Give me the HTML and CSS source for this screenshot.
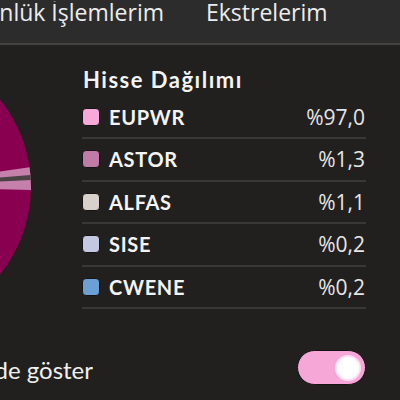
FILE: index.html
```html
<!DOCTYPE html>
<html lang="tr">
<head>
<meta charset="utf-8">
<title>Hisse Dağılımı</title>
<link rel="stylesheet" href="styles.css">
</head>
<body>
<nav class="tabs">
  <div class="tab tab-cut"><span>Günlük İşlemlerim</span></div>
  <div class="tab">Ekstrelerim</div>
</nav>
<main class="content">
  <section class="dist">
    <div class="chart">
      <svg width="82" height="260" viewBox="0 45 82 260" aria-hidden="true">
        <circle cx="-108" cy="187" r="139" fill="#8a0050"/>
        <path d="M-108 187 L29.6 167.2 A139 139 0 0 1 30.97 189.9 Z" fill="#c580ab"/>
        <path d="M-108 187 L30.47 174.9 A139 139 0 0 1 30.82 180 Z" fill="#4a4245"/>
      </svg>
    </div>
    <div class="legend">
      <h2 class="title">Hisse Dağılımı</h2>
      <ul class="rows">
        <li class="row"><span class="swatch sw-eupwr"></span><span class="label">EUPWR</span><span class="value">%97,0</span></li>
        <li class="row"><span class="swatch sw-astor"></span><span class="label">ASTOR</span><span class="value">%1,3</span></li>
        <li class="row"><span class="swatch sw-alfas"></span><span class="label">ALFAS</span><span class="value">%1,1</span></li>
        <li class="row"><span class="swatch sw-sise"></span><span class="label">SISE</span><span class="value">%0,2</span></li>
        <li class="row"><span class="swatch sw-cwene"></span><span class="label">CWENE</span><span class="value">%0,2</span></li>
      </ul>
    </div>
  </section>
  <div class="setting">
    <div class="setting-label"><span>Grafikte yüzde göster</span></div>
    <div class="toggle"><span class="knob"></span></div>
  </div>
</main>
</body>
</html>
```
FILE: styles.css
```css
* { box-sizing: border-box; }
html, body { margin: 0; padding: 0; }
body {
  width: 400px;
  height: 400px;
  overflow: hidden;
  background: #221f1f;
  color: #f2f2f2;
  font-family: "Open Sans", "Noto Sans", sans-serif;
}
.tabs {
  display: flex;
  height: 45px;
  padding-top: 1px;
  background: #2d2c2c;
  border-bottom: 2px solid #444343;
  font-size: 23px;
  line-height: 22px;
  color: #ececec;
  white-space: nowrap;
}
.tab-cut {
  width: 164px;
  overflow: hidden;
  display: flex;
  justify-content: flex-end;
}
.tab + .tab { margin-left: 42px; }
.content {
  padding: 22.6px 34px 0 0;
}
.dist { display: flex; }
.chart { flex: 0 0 82px; margin-top: -22.6px; }
.chart svg { display: block; }
.legend { flex: 1; }
.title {
  margin: 0 0 5px 1px;
  font-family: "Lato", sans-serif;
  font-weight: 700;
  font-size: 22px;
  line-height: 24px;
  letter-spacing: 1.5px;
  color: #f4f4f4;
}
.rows { list-style: none; margin: 0; padding: 0; }
.row {
  display: flex;
  align-items: center;
  height: 42.5px;
  border-bottom: 2px solid #383636;
}
.swatch {
  width: 18px;
  height: 18px;
  border-radius: 4px;
  border: 1px solid #151313;
  margin-right: 9px;
}
.sw-eupwr { background: #f8a9d9; }
.sw-astor { background: #c07ca6; }
.sw-alfas { background: #d8d0cb; }
.sw-sise { background: #c4c8e0; }
.sw-cwene { background: #6c9fd4; }
.label {
  flex: 1;
  font-family: "Lato", sans-serif;
  font-weight: 700;
  font-size: 20px;
  letter-spacing: 0.7px;
  color: #f4f4f4;
}
.value {
  font-size: 21px;
  color: #e6e6e6;
  padding-right: 1px;
}
.setting {
  display: flex;
  justify-content: space-between;
  align-items: flex-start;
  margin-top: 42px;
}
.setting-label {
  width: 93px;
  overflow: hidden;
  display: flex;
  justify-content: flex-end;
  white-space: nowrap;
  margin-top: 6px;
  font-family: "Lato", sans-serif;
  font-size: 24px;
  line-height: 26px;
  color: #f0f0f0;
}
.toggle {
  width: 69px;
  height: 35px;
  margin-top: -1px;
  border-radius: 18px;
  border: 1px solid #141212;
  background: #f7a6d8;
  display: flex;
  align-items: center;
  justify-content: flex-end;
  padding-right: 4px;
}
.knob {
  width: 26px;
  height: 26px;
  border-radius: 50%;
  background: #ffffff;
  border: 2px solid #fde0f1;
}
```
